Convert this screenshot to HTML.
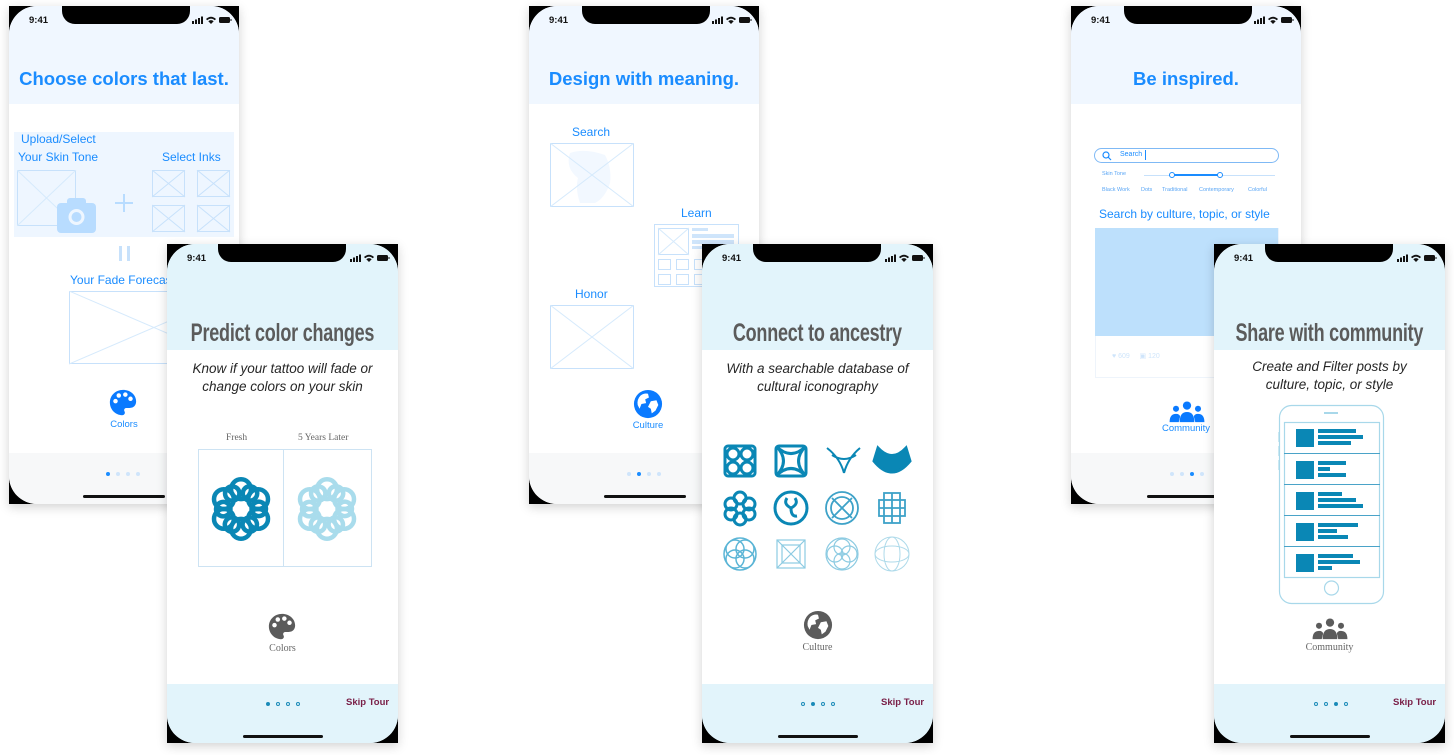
<!DOCTYPE html>
<html><head><meta charset="utf-8"><style>
*{margin:0;padding:0;box-sizing:border-box}
body{width:1454px;height:755px;background:#fff;position:relative;overflow:hidden;font-family:"Liberation Sans",sans-serif}
.ph{position:absolute;background:#000;box-shadow:0 3px 10px rgba(0,0,0,.18)}
.scr{position:absolute;inset:0;border-radius:28px;overflow:hidden;background:#fff}
.a{position:absolute}
.notch{position:absolute;top:0;height:18px;width:128px;background:#000;border-radius:0 0 13px 13px}
.time{position:absolute;left:20px;top:9px;font:bold 9.5px "Liberation Sans",sans-serif;color:#111}
.st{position:absolute;top:9px}
.bt{color:#1a8cff;font-size:12px;white-space:nowrap}
.bh{position:absolute;left:0;right:0;top:0;height:98px;background:#f0f7ff}
.btitle{position:absolute;left:0;right:0;top:62px;text-align:center;font:bold 18.5px "Liberation Sans",sans-serif;color:#1a8cff}
.bfoot{position:absolute;left:0;right:0;bottom:0;height:51px;background:#f7f8f9}
.dot{position:absolute;width:4px;height:4px;border-radius:50%;background:#cfe5fb}
.home{position:absolute;height:3px;background:#111;border-radius:2px}
.fh{position:absolute;left:0;right:0;top:0;height:106px;background:#e2f4fb}
.ftitle{position:absolute;left:-100px;right:-100px;top:75px;text-align:center;white-space:nowrap}
.ftitle span{display:inline-block;font:bold 25px "Liberation Sans",sans-serif;color:#5b5b5b;transform:scaleX(.72);transform-origin:center;letter-spacing:-0.3px}
.fsub{position:absolute;left:-20px;right:-20px;text-align:center;font:italic 13.5px "Liberation Sans",sans-serif;color:#262626;line-height:18px}
.ffoot{position:absolute;left:0;right:0;bottom:0;height:59px;background:#e2f4fb}
.fd{position:absolute;width:4px;height:4px;border-radius:50%;border:1px solid #1a8ab8;top:18px}
.fd.on{background:#1a8ab8}
.skip{position:absolute;top:13px;font:bold 9.5px "Liberation Sans",sans-serif;color:#7a2048}
.ser{font-family:"Liberation Serif",serif;color:#666;font-size:9.5px;white-space:nowrap}
</style></head><body>

<svg width="0" height="0" style="position:absolute">
<defs>
<symbol id="stat" viewBox="0 0 40 10">
<rect x="0" y="6" width="2" height="3" fill="#111"/><rect x="3" y="4.5" width="2" height="4.5" fill="#111"/><rect x="6" y="3" width="2" height="6" fill="#111"/><rect x="9" y="1.5" width="2" height="7.5" fill="#111"/>
<path d="M14 4 Q19 -0.5 24 4 L22.8 5.2 Q19 2 15.2 5.2Z M16.3 6.3 Q19 4 21.7 6.3 L19 9Z" fill="#111"/>
<rect x="27" y="2" width="11" height="6" rx="1.5" fill="#111"/><rect x="38.5" y="4" width="1" height="2" fill="#111"/>
</symbol>
<symbol id="pal" viewBox="0 0 32 32">
<path d="M16 2C8 2 2 8 2 15.5 2 23 8 29 15 29c2 0 3-1.2 3-2.7 0-1-.8-1.7-.8-2.7 0-1.3 1-2.3 2.3-2.3H23c4.5 0 7-3 7-7C30 7.5 24 2 16 2z"/>
<circle cx="8" cy="14" r="2.4" fill="#fff"/><circle cx="11.5" cy="8" r="2.4" fill="#fff"/><circle cx="18.5" cy="7" r="2.4" fill="#fff"/><circle cx="24" cy="11.5" r="2.4" fill="#fff"/>
</symbol>
<symbol id="globe" viewBox="0 0 32 32">
<circle cx="16" cy="16" r="15"/>
<path d="M8 7 Q12 4 16 5 L17 9 L13 11 L14 15 L9 16 L7 21 L5 17 Q4 11 8 7Z M19 13 L25 12 L27 17 L24 23 L20 26 L19 21 L16 19 Z" fill="#fff"/>
</symbol>
<symbol id="comm" viewBox="0 0 40 24">
<circle cx="20" cy="5" r="4.5"/><path d="M12 23 Q12 12 20 12 Q28 12 28 23Z"/>
<circle cx="8" cy="8.5" r="3.3"/><path d="M1 23 Q1 14 8 14 Q12 14 12.5 17 L11 23Z"/>
<circle cx="32" cy="8.5" r="3.3"/><path d="M39 23 Q39 14 32 14 Q28 14 27.5 17 L29 23Z"/>
</symbol>
<symbol id="knot" viewBox="0 0 80 80">
<g fill="none" stroke-width="5">
<g transform="translate(40 40)">
<circle cx="0" cy="-22" r="11"/><circle cx="19" cy="-11" r="11"/><circle cx="19" cy="11" r="11"/><circle cx="0" cy="22" r="11"/><circle cx="-19" cy="11" r="11"/><circle cx="-19" cy="-11" r="11"/>
<g transform="rotate(30)"><circle cx="0" cy="-20" r="8"/><circle cx="17" cy="-10" r="8"/><circle cx="17" cy="10" r="8"/><circle cx="0" cy="20" r="8"/><circle cx="-17" cy="10" r="8"/><circle cx="-17" cy="-10" r="8"/></g>
</g></g>
</symbol>
</defs>
</svg>

<!-- BACK PHONE 1 -->
<div class="ph" style="left:9px;top:6px;width:230px;height:498px">
<div class="scr">
<div class="bh"></div>
<div class="btitle">Choose colors that last.</div>
<div class="a" style="left:5px;top:126px;width:220px;height:105px;background:#eef6ff"></div>
<div class="a bt" style="left:12px;top:126px">Upload/Select</div>
<div class="a bt" style="left:9px;top:144px">Your Skin Tone</div>
<div class="a bt" style="left:153px;top:144px">Select Inks</div>
<svg class="a" style="left:8px;top:164px" width="60" height="56"><rect x=".5" y=".5" width="58" height="55" fill="none" stroke="#c7e1fb"/><path d="M0 0L59 56M59 0L0 56" stroke="#d6eafc"/></svg>
<svg class="a" style="left:48px;top:192px" width="40" height="35"><rect x="0" y="5" width="39" height="30" rx="4" fill="#b8dcff"/><rect x="10" y="0" width="19" height="8" rx="3" fill="#b8dcff"/><circle cx="19.5" cy="19" r="8" fill="#eef6ff"/><circle cx="19.5" cy="19" r="5" fill="#b8dcff"/></svg>
<div class="a" style="left:106px;top:196px;width:18px;height:2px;background:#b8dcff"></div>
<div class="a" style="left:114px;top:188px;width:2px;height:18px;background:#b8dcff"></div>
<svg class="a" style="left:143px;top:164px" width="80" height="64">
<g fill="none" stroke="#c7e1fb"><rect x=".5" y=".5" width="32" height="26"/><path d="M0 0L33 27M33 0L0 27"/><rect x="45.5" y=".5" width="32" height="26"/><path d="M45 0L78 27M78 0L45 27"/><rect x=".5" y="35.5" width="32" height="26"/><path d="M0 35L33 62M33 35L0 62"/><rect x="45.5" y="35.5" width="32" height="26"/><path d="M45 35L78 62M78 35L45 62"/></g></svg>
<div class="a" style="left:110px;top:240px;width:3px;height:15px;background:#c7e1fb"></div>
<div class="a" style="left:118px;top:240px;width:3px;height:15px;background:#c7e1fb"></div>
<div class="a bt" style="left:61px;top:267px">Your Fade Forecast</div>
<svg class="a" style="left:60px;top:285px" width="170" height="74"><rect x=".5" y=".5" width="169" height="72" fill="none" stroke="#c7e1fb"/><path d="M0 0L170 73M170 0L0 73" stroke="#d6eafc"/></svg>
<svg class="a" style="left:99px;top:382px;fill:#0a7aff" width="30" height="30"><use href="#pal"/></svg>
<div class="a" style="left:0;width:230px;top:413px;text-align:center;font-size:9.5px;color:#1a8cff">Colors</div>
<div class="bfoot"></div>
<div class="dot" style="left:97px;top:466px;background:#1a8cff"></div><div class="dot" style="left:107px;top:466px"></div><div class="dot" style="left:117px;top:466px"></div><div class="dot" style="left:127px;top:466px"></div>
<div class="home" style="left:74px;top:489px;width:82px"></div>
</div>
<div class="notch" style="left:53px"></div>
<div class="time">9:41</div>
<svg class="st" style="left:183px" width="40" height="10"><use href="#stat"/></svg>
</div>

<!-- BACK PHONE 2 -->
<div class="ph" style="left:529px;top:6px;width:230px;height:498px">
<div class="scr">
<div class="bh"></div>
<div class="btitle">Design with meaning.</div>
<div class="a bt" style="left:43px;top:119px">Search</div>
<svg class="a" style="left:21px;top:137px" width="84" height="64"><path d="M20 10 Q35 5 55 12 Q62 25 60 40 Q55 55 45 60 L30 60 Q25 45 28 35 Q15 25 20 10Z" fill="#f2f8ff"/><rect x=".5" y=".5" width="83" height="63" fill="none" stroke="#c7e1fb"/><path d="M0 0L84 64M84 0L0 64" stroke="#d6eafc"/></svg>
<div class="a bt" style="left:152px;top:200px">Learn</div>
<svg class="a" style="left:125px;top:218px" width="86" height="64"><rect x=".5" y=".5" width="84" height="62" fill="none" stroke="#c7e1fb"/><rect x="4.5" y="4.5" width="30" height="26" fill="none" stroke="#c7e1fb"/><path d="M4 4L35 31M35 4L4 31" stroke="#d6eafc"/><rect x="38" y="4" width="16" height="3" fill="#cfe5fb"/><rect x="38" y="10" width="42" height="4" fill="#cfe5fb"/><rect x="38" y="16" width="42" height="4" fill="#cfe5fb"/><rect x="38" y="22" width="42" height="3" fill="#cfe5fb"/>
<g fill="none" stroke="#c7e1fb"><rect x="4.5" y="35.5" width="12" height="10"/><rect x="22.5" y="35.5" width="12" height="10"/><rect x="40.5" y="35.5" width="12" height="10"/><rect x="4.5" y="50.5" width="12" height="10"/><rect x="22.5" y="50.5" width="12" height="10"/><rect x="40.5" y="50.5" width="12" height="10"/></g></svg>
<div class="a bt" style="left:46px;top:281px">Honor</div>
<svg class="a" style="left:21px;top:299px" width="84" height="64"><rect x=".5" y=".5" width="83" height="63" fill="none" stroke="#c7e1fb"/><path d="M0 0L84 64M84 0L0 64" stroke="#d6eafc"/></svg>
<svg class="a" style="left:104px;top:383px;fill:#0a7aff" width="30" height="30"><use href="#globe"/></svg>
<div class="a" style="left:0;width:238px;top:414px;text-align:center;font-size:9.5px;color:#1a8cff">Culture</div>
<div class="bfoot"></div>
<div class="dot" style="left:98px;top:466px"></div><div class="dot" style="left:108px;top:466px;background:#1a8cff"></div><div class="dot" style="left:118px;top:466px"></div><div class="dot" style="left:128px;top:466px"></div>
<div class="home" style="left:75px;top:489px;width:82px"></div>
</div>
<div class="notch" style="left:53px"></div>
<div class="time">9:41</div>
<svg class="st" style="left:183px" width="40" height="10"><use href="#stat"/></svg>
</div>

<!-- BACK PHONE 3 -->
<div class="ph" style="left:1071px;top:6px;width:230px;height:498px">
<div class="scr">
<div class="bh"></div>
<div class="btitle">Be inspired.</div>
<div class="a" style="left:23px;top:142px;width:185px;height:15px;border:1px solid #7fb9f5;border-radius:8px"></div>
<svg class="a" style="left:31px;top:145px" width="10" height="10"><circle cx="4" cy="4" r="3" fill="none" stroke="#1a8cff" stroke-width="1.2"/><path d="M6 6L9 9" stroke="#1a8cff" stroke-width="1.2"/></svg>
<div class="a" style="left:49px;top:145px;font-size:7px;color:#1a8cff">Search</div>
<div class="a" style="left:74px;top:144px;width:1px;height:10px;background:#1a8cff"></div>
<div class="a" style="left:31px;top:165px;font-size:5.5px;color:#5aa6f5">Skin Tone</div>
<div class="a" style="left:73px;top:169px;width:131px;height:1px;background:#c7e1fb"></div>
<div class="a" style="left:102px;top:168px;width:48px;height:2px;background:#1a8cff"></div>
<div class="a" style="left:98px;top:166px;width:6px;height:6px;border:1.5px solid #1a8cff;border-radius:50%;background:#fff"></div>
<div class="a" style="left:146px;top:166px;width:6px;height:6px;border:1.5px solid #1a8cff;border-radius:50%;background:#fff"></div>
<div class="a" style="left:31px;top:181px;font-size:5.5px;color:#5aa6f5;white-space:nowrap;width:180px">Black Work<span style="position:absolute;left:39px">Dots</span><span style="position:absolute;left:60px">Traditional</span><span style="position:absolute;left:97px">Contemporary</span><span style="position:absolute;left:146px">Colorful</span></div>
<div class="a bt" style="left:28px;top:201px">Search by culture, topic, or style</div>
<div class="a" style="left:24px;top:222px;width:184px;height:150px;border:1px solid #eef4fb"></div>
<div class="a" style="left:24px;top:222px;width:183px;height:108px;background:#bde0fc"></div>
<div class="a" style="left:41px;top:346px;font-size:7px;color:#cfe5fb">♥ 609 &nbsp;&nbsp;&nbsp; ▣ 120</div>
<svg class="a" style="left:97px;top:395px;fill:#0a7aff" width="38" height="22"><use href="#comm"/></svg>
<div class="a" style="left:0;width:230px;top:417px;text-align:center;font-size:9.5px;color:#1a8cff">Community</div>
<div class="bfoot"></div>
<div class="dot" style="left:99px;top:466px"></div><div class="dot" style="left:109px;top:466px"></div><div class="dot" style="left:119px;top:466px;background:#1a8cff"></div><div class="dot" style="left:129px;top:466px"></div>
<div class="home" style="left:76px;top:489px;width:82px"></div>
</div>
<div class="notch" style="left:53px"></div>
<div class="time">9:41</div>
<svg class="st" style="left:183px" width="40" height="10"><use href="#stat"/></svg>
</div>

<!-- FRONT PHONE 1 -->
<div class="ph" style="left:167px;top:244px;width:231px;height:499px">
<div class="scr">
<div class="fh"></div>
<div class="ftitle"><span>Predict color changes</span></div>
<div class="fsub" style="top:116px">Know if your tattoo will fade or<br>change colors on your skin</div>
<div class="a ser" style="left:59px;top:189px">Fresh</div>
<div class="a ser" style="left:131px;top:189px">5 Years Later</div>
<div class="a" style="left:31px;top:205px;width:174px;height:118px;border:1px solid #cde3f3"></div>
<div class="a" style="left:116px;top:205px;width:1px;height:118px;background:#cde3f3"></div>
<svg class="a" style="left:38px;top:229px;stroke:#0a87b5" width="72" height="72"><use href="#knot"/></svg>
<svg class="a" style="left:124px;top:229px;stroke:#a9dcec" width="72" height="72"><use href="#knot"/></svg>
<svg class="a" style="left:100px;top:368px;fill:#5b5b5b" width="30" height="30"><use href="#pal"/></svg>
<div class="a ser" style="left:0;width:231px;top:399px;text-align:center;font-size:10px">Colors</div>
<div class="ffoot">
<div class="fd on" style="left:99px"></div><div class="fd" style="left:109px"></div><div class="fd" style="left:119px"></div><div class="fd" style="left:129px"></div>
<div class="skip" style="left:179px">Skip Tour</div>
</div>
<div class="home" style="left:76px;top:491px;width:80px"></div>
</div>
<div class="notch" style="left:51px"></div>
<div class="time">9:41</div>
<svg class="st" style="left:183px" width="40" height="10"><use href="#stat"/></svg>
</div>

<!-- FRONT PHONE 2 -->
<div class="ph" style="left:702px;top:244px;width:231px;height:499px">
<div class="scr">
<div class="fh"></div>
<div class="ftitle"><span>Connect to ancestry</span></div>
<div class="fsub" style="top:116px">With a searchable database of<br>cultural iconography</div>
<svg class="a" style="left:20px;top:199px" width="190" height="130">
<g fill="none" stroke="#0a87b5" stroke-width="3">
<rect x="3" y="3" width="30" height="30" rx="3"/><circle cx="11" cy="11" r="6"/><circle cx="25" cy="11" r="6"/><circle cx="11" cy="25" r="6"/><circle cx="25" cy="25" r="6"/>
<rect x="54" y="3" width="30" height="30" rx="3"/><path d="M54 3 Q69 18 84 3 M54 33 Q69 18 84 33 M54 3 Q69 18 54 33 M84 3 Q69 18 84 33"/>
<path d="M105 5 Q118 15 122 30 M138 5 Q126 15 122 30 M110 12 Q122 20 134 12" stroke-width="2"/>
<path d="M156 5 Q170 20 184 5 L188 18 Q170 40 152 18Z" fill="#0a87b5"/>
<g transform="translate(18 65)"><circle cx="0" cy="-10" r="6"/><circle cx="9" cy="-4" r="6"/><circle cx="9" cy="6" r="6"/><circle cx="0" cy="11" r="6"/><circle cx="-9" cy="6" r="6"/><circle cx="-9" cy="-4" r="6"/></g>
<circle cx="69" cy="65" r="16"/><path d="M69 65 q-8 -4 -4 -10 M69 65 q8 -4 4 -10 M69 65 q0 9 6 8"/>
</g>
<g fill="none" stroke="#3ea2c8" stroke-width="1.8">
<circle cx="120" cy="65" r="16"/><circle cx="120" cy="65" r="11"/><path d="M110 55 L130 75 M130 55 L110 75"/>
<rect x="157" y="57" width="26" height="16"/><rect x="162" y="50" width="16" height="30"/><path d="M157 65 H183 M170 50 V80"/>
</g>
<g fill="none" stroke="#5bb5d6" stroke-width="1.5">
<circle cx="18" cy="111" r="16"/><circle cx="13" cy="106" r="9"/><circle cx="23" cy="116" r="9"/><circle cx="13" cy="116" r="9"/><circle cx="23" cy="106" r="9"/>
</g>
<g fill="none" stroke="#8ccbe2" stroke-width="1.2">
<rect x="55" y="97" width="28" height="28"/><rect x="60" y="102" width="18" height="18"/><path d="M55 97 L83 125 M83 97 L55 125"/>
<circle cx="120" cy="111" r="16"/><circle cx="120" cy="104" r="8"/><circle cx="120" cy="118" r="8"/><circle cx="113" cy="111" r="8"/><circle cx="127" cy="111" r="8"/>
</g>
<g fill="none" stroke="#aedaea" stroke-width="1">
<circle cx="170" cy="111" r="17"/><ellipse cx="170" cy="111" rx="17" ry="8"/><ellipse cx="170" cy="111" rx="8" ry="17"/>
</g>
</svg>
<svg class="a" style="left:101px;top:366px;fill:#5b5b5b" width="30" height="30"><use href="#globe"/></svg>
<div class="a ser" style="left:0;width:231px;top:398px;text-align:center;font-size:10px">Culture</div>
<div class="ffoot">
<div class="fd" style="left:99px"></div><div class="fd on" style="left:109px"></div><div class="fd" style="left:119px"></div><div class="fd" style="left:129px"></div>
<div class="skip" style="left:179px">Skip Tour</div>
</div>
<div class="home" style="left:76px;top:491px;width:80px"></div>
</div>
<div class="notch" style="left:51px"></div>
<div class="time">9:41</div>
<svg class="st" style="left:183px" width="40" height="10"><use href="#stat"/></svg>
</div>

<!-- FRONT PHONE 3 -->
<div class="ph" style="left:1214px;top:244px;width:231px;height:499px">
<div class="scr">
<div class="fh"></div>
<div class="ftitle"><span>Share with community</span></div>
<div class="fsub" style="top:114px">Create and Filter posts by<br>culture, topic, or style</div>
<svg class="a" style="left:62px;top:160px" width="110" height="202">
<g fill="none" stroke="#a8d8ea" stroke-width="1.2">
<rect x="3.5" y="1.5" width="104" height="198" rx="12"/><path d="M48 9 H62" stroke-width="2"/><circle cx="55.5" cy="184" r="7"/>
<rect x="8.5" y="18.5" width="95" height="155"/>
<path d="M3 28 v10 M3 42 v10 M3 56 v10"/>
</g>
<g fill="#0a87b5">
<path d="M8 49h96v1H8zM8 80h96v1H8zM8 111h96v1H8zM8 142h96v1H8z" fill="#4aa3c8"/>
<rect x="20" y="25" width="18" height="18"/><rect x="42" y="25" width="38" height="4"/><rect x="42" y="31" width="45" height="4"/><rect x="42" y="37" width="33" height="4"/>
<rect x="20" y="57" width="18" height="18"/><rect x="42" y="57" width="28" height="4"/><rect x="42" y="63" width="12" height="4"/><rect x="42" y="69" width="28" height="4"/>
<rect x="20" y="88" width="18" height="18"/><rect x="42" y="88" width="24" height="4"/><rect x="42" y="94" width="38" height="4"/><rect x="42" y="100" width="45" height="4"/>
<rect x="20" y="119" width="18" height="18"/><rect x="42" y="119" width="40" height="4"/><rect x="42" y="125" width="19" height="4"/><rect x="42" y="131" width="30" height="4"/>
<rect x="20" y="150" width="18" height="18"/><rect x="42" y="150" width="35" height="4"/><rect x="42" y="156" width="42" height="4"/><rect x="42" y="162" width="14" height="4"/>
</g></svg>
<svg class="a" style="left:97px;top:374px;fill:#5b5b5b" width="38" height="22"><use href="#comm"/></svg>
<div class="a ser" style="left:0;width:231px;top:398px;text-align:center;font-size:10px">Community</div>
<div class="ffoot">
<div class="fd" style="left:100px"></div><div class="fd" style="left:110px"></div><div class="fd on" style="left:120px"></div><div class="fd" style="left:130px"></div>
<div class="skip" style="left:179px">Skip Tour</div>
</div>
<div class="home" style="left:76px;top:491px;width:80px"></div>
</div>
<div class="notch" style="left:51px"></div>
<div class="time">9:41</div>
<svg class="st" style="left:183px" width="40" height="10"><use href="#stat"/></svg>
</div>

</body></html>
